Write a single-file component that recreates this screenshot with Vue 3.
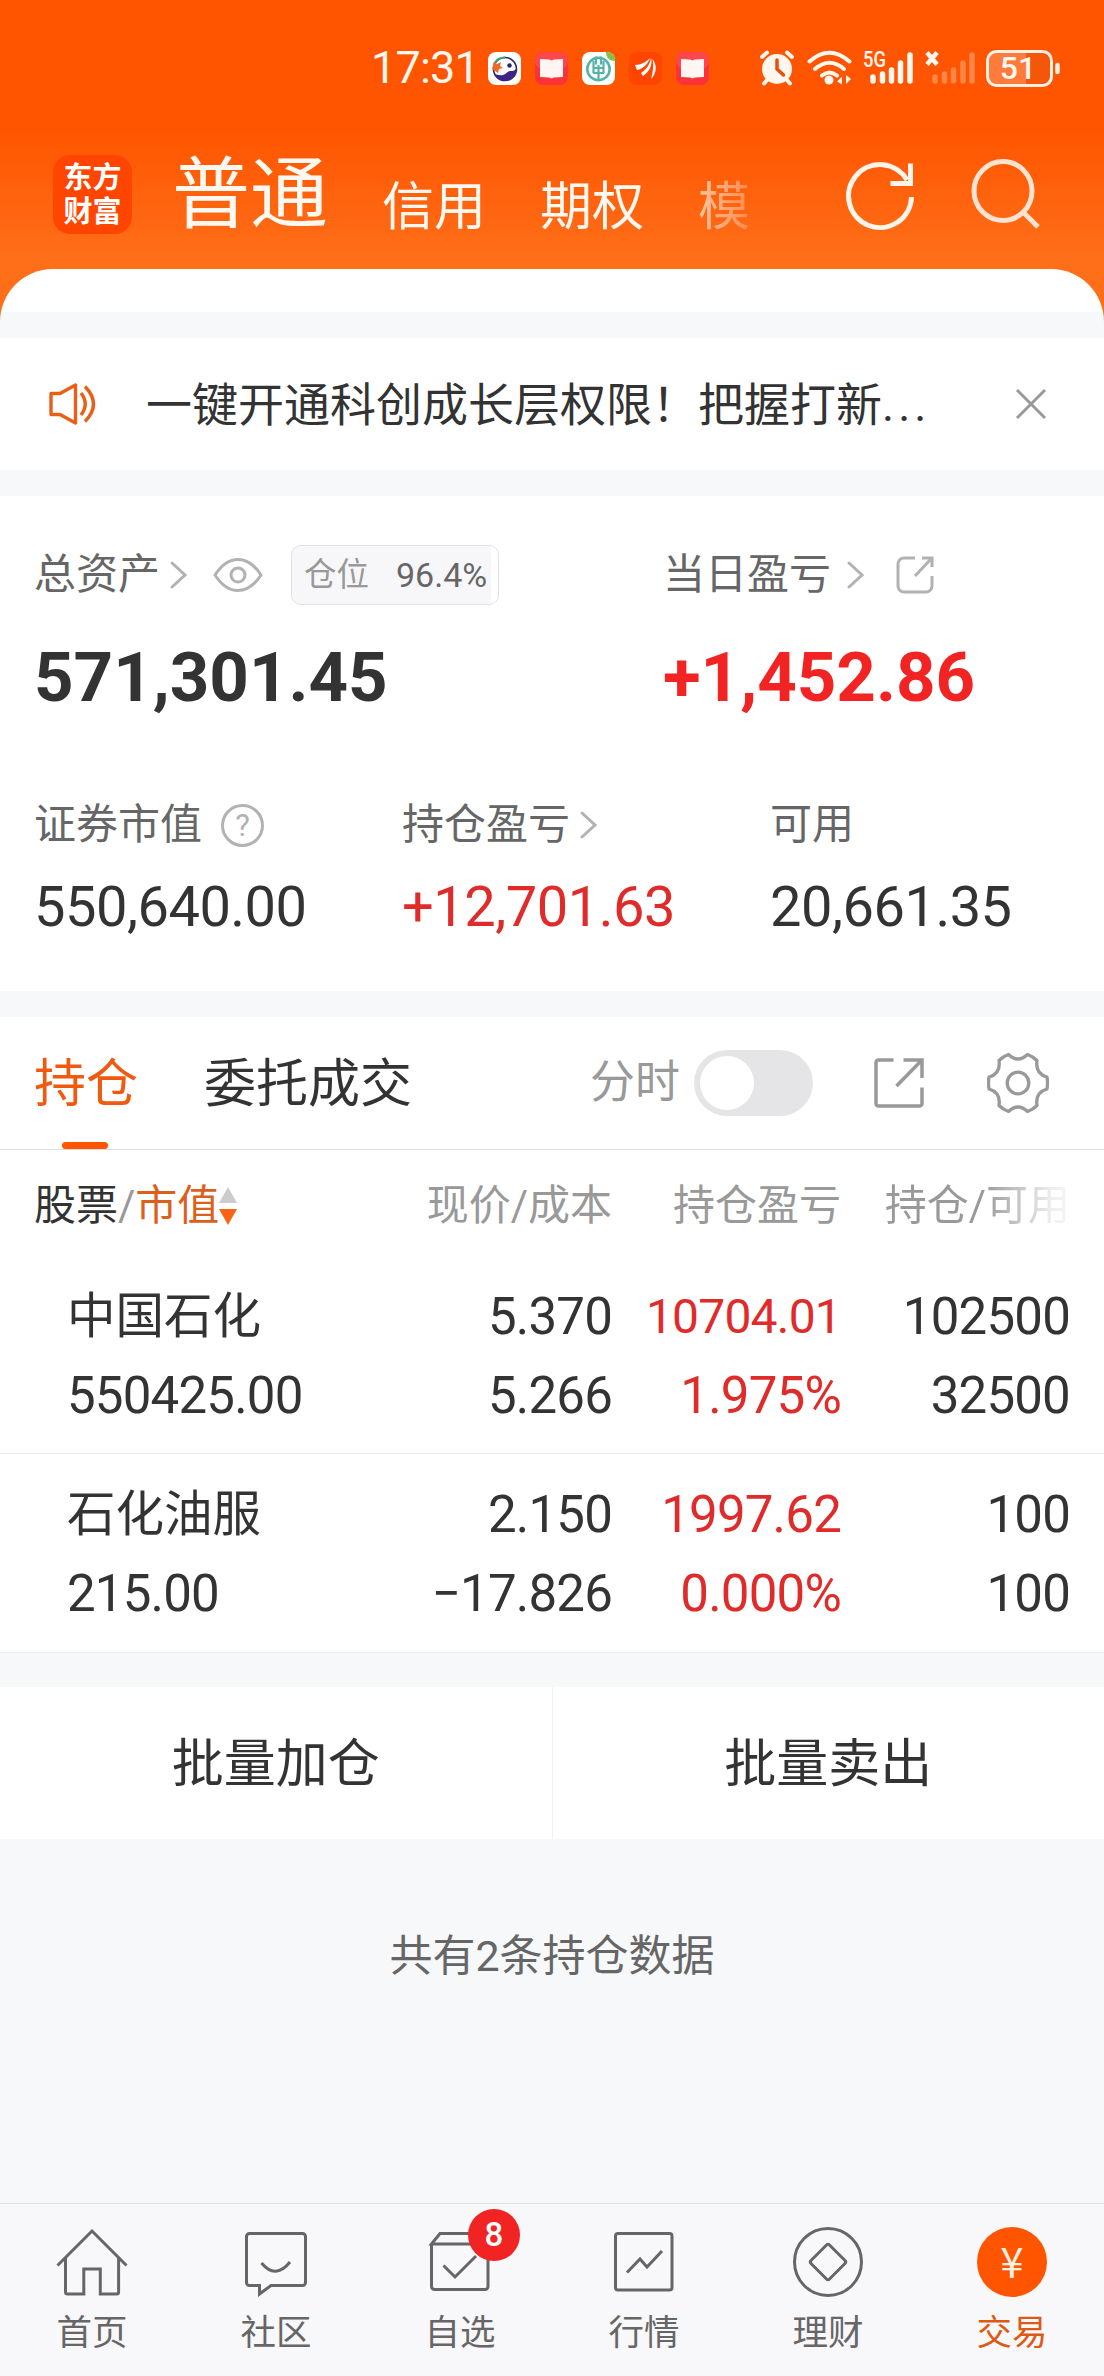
<template>
  <div class="page">
    <header class="top">
      <div class="statusbar">
        <span class="clock">17:31</span>
        <div class="notifs">
          <svg viewBox="0 0 33 33">
            <rect width="33" height="33" rx="8" fill="#fff" />
            <circle cx="17" cy="17" r="11.5" fill="#fff" stroke="#2c2a6e" stroke-width="1.6" />
            <path d="M6 12A12 12 0 0 1 17 5.500" fill="none" stroke="#39a86b" stroke-width="2" />
            <path d="M6 22c3 0 5 2 9 1s4-4 8-4 4-1 5.500-3C29 24 23 29 17 29S8 26 6 22z" fill="#3d2585" />
            <path d="M4 17l2-7 3 2 4-2-1 4 3 2-4 1-1 4-3-2z" fill="#ee6a2c" />
            <circle cx="21.500" cy="13.500" r="2.200" fill="#222a5c" />
          </svg>
          <svg viewBox="0 0 33 33">
            <rect width="33" height="33" rx="8" fill="#fb3338" />
            <rect width="33" height="17" rx="8" fill="#fd474b" />
            <path d="M5 7l9 .5 2.500 1 2.500-1 9-.5v18l-9 .5-2.500 1-2.500-1-9-.5z" fill="#fff6f4" />
          </svg>
          <svg viewBox="0 0 33 33">
            <rect width="33" height="33" rx="8" fill="#fff" />
            <path d="M24 0h1a8 8 0 0 1 8 8v1c-5 0-9-3-9-9z" fill="#7cc24c" />
            <circle cx="16.500" cy="17" r="11.200" fill="none" stroke="#55b3a8" stroke-width="2.600" />
            <path d="M14 4.500v8M19 4.500v8M11.500 9v12M21.500 9v12M16.500 13v15M11 16h11M11 21h11" fill="none" stroke="#55b3a8" stroke-width="2.200" />
          </svg>
          <svg viewBox="0 0 33 33">
            <rect width="33" height="33" rx="8" fill="#ff4500" />
            <path d="M6 13c6 0 11-3 15-7-2 6-7 11-13 12zM12 21c6-4 9-9 10-15 2 7-2 14-8 18zM22 27c2-7 3-14 1.500-20 5 6 4 15-1.500 20z" fill="#fff" />
          </svg>
          <svg viewBox="0 0 33 33">
            <rect width="33" height="33" rx="8" fill="#fb3338" />
            <rect width="33" height="17" rx="8" fill="#fd474b" />
            <path d="M5 7l9 .5 2.500 1 2.500-1 9-.5v18l-9 .5-2.500 1-2.500-1-9-.5z" fill="#fff6f4" />
          </svg>
        </div>
        <svg class="system" viewBox="0 0 304 40">
          <!-- alarm -->
          <g fill="none" stroke="#fff6ee" stroke-width="4" stroke-linecap="round">
            <circle cx="19" cy="21" r="15" fill="#fff6ee" stroke="none" />
            <path d="M4 9l5-4.500M34 9l-5-4.500M9 32l-3 3.500M29 32l3 3.500" />
            <path d="M19 12v9l6.500 6" stroke="#e8500a" stroke-width="3.500" />
          </g>
          <!-- wifi -->
          <g fill="none" stroke="#fff6ee" stroke-width="4" stroke-linecap="round">
            <path d="M51.500 13.500q20-17.500 40 0M57 21q14.500-12.500 29 0M64 27.500q7.500-6 15 0" />
            <circle cx="71" cy="32" r="4.500" fill="#fff6ee" stroke="none" />
            <path d="M79 33.500l5-5v8zM93 31l-5-4v9z" fill="#fff6ee" stroke="none" />
          </g>
          <text x="105" y="18.500" class="net" textLength="23" lengthAdjust="spacingAndGlyphs">5G</text>
          <g stroke="#fff6ee" stroke-width="5.500" stroke-linecap="round">
            <path d="M115 29v4M124.500 26v7M133.500 22v11M142.500 15v18M152 7v26" />
            <path d="M177 29v4M186.500 26v7M195.500 22v11M205 15v18M214 7v26" stroke="#ff8647" />
          </g>
          <path d="M169 4.500l10 12M179 4.500l-10 12" stroke="#fff6ee" stroke-width="4.500" />
          <rect x="229.500" y="3.500" width="64" height="34" rx="9" fill="#f4560a" />
          <path d="M238.500 3.500h29.500v34h-29.500a9 9 0 0 1-9-9v-16a9 9 0 0 1 9-9z" fill="#ff7b3b" />
          <rect x="229.500" y="3.500" width="64" height="34" rx="9" fill="none" stroke="#fff0e4" stroke-width="3" />
          <path d="M299.500 17v7" stroke="#fff0e4" stroke-width="4.500" stroke-linecap="round" />
          <text x="260" y="31" class="battery" text-anchor="middle">51</text>
        </svg>
      </div>
      <div class="navbar">
        <div class="logo"><span>东方</span><span>财富</span></div>
        <nav class="accounts">
          <span class="current">普通</span>
          <span>信用</span>
          <span>期权</span>
          <span class="fading">模</span>
        </nav>
        <svg class="refresh" viewBox="0 0 72 72">
          <path d="M63.100 20A31.500 31.500 0 1 0 67.500 37" />
          <path d="M66.500 3.500v20H46.500" />
        </svg>
        <svg class="search" viewBox="0 0 72 74">
          <ellipse cx="34" cy="32" rx="29" ry="29.500" />
          <path d="M55 54l14 14" />
        </svg>
      </div>
      <div class="sheet"></div>
    </header>

    <section class="notice">
      <svg class="speaker" viewBox="0 0 50 44">
        <path d="M3 11.500h9L27.500 3v38L12 32.500H3zM33 11q8.500 11 0 22M37 4.500q17 17.500 0 35" />
      </svg>
      <p>一键开通科创成长层权限！把握打新<i>...</i></p>
      <svg class="close" viewBox="0 0 32 32"><path d="M2 2l28 28M30 2L2 30" /></svg>
    </section>

    <section class="assets">
      <div class="totals">
        <div class="total">
          <div class="label">
            总资产
            <svg class="chevron" viewBox="0 0 20 30"><path d="M3 3l13 12L3 27" /></svg>
            <svg class="eye" viewBox="0 0 50 36">
              <path d="M2 18Q12 2.500 25 2.500T48 18Q38 33.500 25 33.500T2 18z" />
              <circle cx="25" cy="18" r="7" />
            </svg>
            <div class="ratio"><em>仓位</em><b>96.4%</b></div>
          </div>
          <div class="amount">571,301.45</div>
        </div>
        <div class="total">
          <div class="label">
            当日盈亏
            <svg class="chevron day" viewBox="0 0 20 30"><path d="M3 3l13 12L3 27" /></svg>
            <svg class="share-sm" viewBox="0 0 40 40">
              <path d="M20 3H9a6 6 0 0 0-6 6v22a6 6 0 0 0 6 6h22a6 6 0 0 0 6-6V21M27 3h10v9M36 4L20 21" />
            </svg>
          </div>
          <div class="amount up">+1,452.86</div>
        </div>
      </div>
      <div class="details">
        <div v-for="d in details" :key="d.label" class="detail">
          <div class="label">
            {{ d.label }}
            <span v-if="d.help" class="help">?</span>
            <svg v-if="d.link" class="chevron" viewBox="0 0 20 30"><path d="M3 3l13 12L3 27" /></svg>
          </div>
          <div class="value" :class="{ up: d.up }">{{ d.value }}</div>
        </div>
      </div>
    </section>

    <section class="positions">
      <div class="tabs">
        <span class="tab active">持仓</span>
        <span class="tab">委托成交</span>
        <span class="minute">分时</span>
        <span class="switch" :class="{ on: minuteOn }" @click="minuteOn = !minuteOn"></span>
        <svg class="share" viewBox="0 0 54 54">
          <path d="M21.500 4H6.500a2.500 2.500 0 0 0-2.500 2.500v41A2.500 2.500 0 0 0 6.500 50h41a2.500 2.500 0 0 0 2.500-2.500V31.500M31.500 4H50v18M49 5L24.500 30" />
        </svg>
        <svg class="gear" viewBox="0 0 62 62">
          <path d="M21.500 2.500Q31 11.500 40.500 2.500Q46 4.500 50 8.500Q48 21.500 60 25Q61 31 60 37Q48 40.500 50 53.500Q46 57.500 40.500 59.500Q31 50.500 21.500 59.500Q16 57.500 12 53.500Q14 40.500 2 37Q1 31 2 25Q14 21.500 12 8.500Q16 4.500 21.500 2.500Z" />
          <circle cx="31" cy="31" r="10.800" />
        </svg>
      </div>

      <div class="grid head">
        <div class="sorter">
          <span class="name">股票</span>/<span class="sorted">市值</span>
          <svg viewBox="0 0 18 38"><path d="M9 0l9 16H0z" fill="#ccc" /><path d="M9 38l9-16H0z" fill="#fa6414" /></svg>
        </div>
        <div>现价/成本</div>
        <div>持仓盈亏</div>
        <div class="last">持仓/可用</div>
      </div>
      <div v-for="s in stocks" :key="s.name" class="grid row">
        <div class="stock">{{ s.name }}</div>
        <div>{{ s.price }}</div>
        <div class="up" :class="{ small: s.profit.length > 7 }">{{ s.profit }}</div>
        <div>{{ s.held }}</div>
        <div class="stock">{{ s.market }}</div>
        <div>{{ s.cost }}</div>
        <div class="up">{{ s.percent }}</div>
        <div>{{ s.usable }}</div>
      </div>
    </section>

    <section class="batch">
      <button>批量加仓</button>
      <button>批量卖出</button>
    </section>
    <p class="count">共有{{ stocks.length }}条持仓数据</p>

    <footer class="tabbar">
      <div class="item">
        <svg viewBox="0 0 72 72"><path d="M1.500 39.500L36 5l34.500 34.500M9.500 32v34a2 2 0 0 0 2 2h16.300V43h16.500v25h16.300a2 2 0 0 0 2-2V32" /></svg>
        <span>首页</span>
      </div>
      <div class="item">
        <svg viewBox="0 0 72 72"><path d="M9.500 7.500h53a3 3 0 0 1 3 3v46a3 3 0 0 1-3 3H31L19.500 68v-8.500h-10a3 3 0 0 1-3-3v-46a3 3 0 0 1 3-3zM21.500 37q14 17 28.500-1" /></svg>
        <span>社区</span>
      </div>
      <div class="item">
        <svg viewBox="0 0 72 72"><path d="M7.500 18L16 7.500h40L64.500 18zM7.500 18v42.500a3 3 0 0 0 3 3h50.500a3 3 0 0 0 3-3V18M19.500 39.500L31 51l21-21" /></svg>
        <i class="badge">8</i>
        <span>自选</span>
      </div>
      <div class="item">
        <svg viewBox="0 0 72 72"><rect x="7.500" y="7.500" width="56.500" height="56.500" rx="2.500" /><path d="M19 46.500L32 33l7 8 15-16" /></svg>
        <span>行情</span>
      </div>
      <div class="item">
        <svg viewBox="0 0 72 72"><circle cx="36" cy="36" r="33.500" /><path d="M34.500 19q1.500-1.500 3 0l15.500 15.500q1.500 1.500 0 3L37.500 53q-1.500 1.500-3 0L19 37.500q-1.500-1.500 0-3z" /></svg>
        <span>理财</span>
      </div>
      <div class="item active">
        <div class="yuan">¥</div>
        <span>交易</span>
      </div>
    </footer>
  </div>
</template>

<script setup>
import { ref } from "vue";

const minuteOn = ref(false)

const details = [
  { label: "证券市值", value: "550,640.00", help: true },
  { label: "持仓盈亏", value: "+12,701.63", link: true, up: true },
  { label: "可用", value: "20,661.35" },
]

const stocks = [
  {
    name: "中国石化", market: "550425.00",
    price: "5.370", cost: "5.266",
    profit: "10704.01", percent: "1.975%",
    held: "102500", usable: "32500",
  },
  {
    name: "石化油服", market: "215.00",
    price: "2.150", cost: "−17.826",
    profit: "1997.62", percent: "0.000%",
    held: "100", usable: "100",
  },
]
</script>

<style>
body {
  margin: 0;
  background: #f6f7f9;
}
</style>

<style scoped>
.page {
  width: 1104px;
  height: 2376px;
  display: flex;
  flex-direction: column;
  overflow: hidden;
  background: #f7f8fa;
  color: #333;
  font-family: Roboto, "Noto Sans CJK SC", sans-serif;
}

svg {
  flex: none;
  display: block;
  fill: none;
}

p {
  margin: 0;
}

i, em {
  font-style: normal;
}

.up {
  color: #e02b2b;
}

/* header */
.top {
  height: 338px;
  background: linear-gradient(#ff5500 130px, #ff6f1a 262px);
}

.statusbar {
  height: 136px;
  display: flex;
  align-items: center;
  padding-left: 371px;
}

.clock {
  width: 117px;
  font-size: 45px;
  letter-spacing: -0.8px;
  line-height: 136px;
  color: #fff6ee;
}

.notifs {
  display: flex;
  gap: 14px;
}

.notifs svg {
  width: 33px;
  height: 33px;
}

.system {
  width: 304px;
  height: 40px;
  margin-left: 49px;
}

.net {
  fill: #fff6ee;
  font-size: 22px;
  font-weight: 500;
}

.battery {
  fill: #fff6ee;
  font-size: 32px;
  font-weight: 500;
}

.navbar {
  height: 133px;
  display: flex;
  align-items: flex-start;
  padding-left: 53px;
}

.logo {
  width: 79px;
  height: 79px;
  box-sizing: border-box;
  margin-top: 19px;
  padding-top: 6px;
  border-radius: 17px;
  background: #ff4500;
  color: #fff;
  font-size: 29px;
  font-weight: 700;
  line-height: 34px;
  text-align: center;
  display: flex;
  flex-direction: column;
}

.accounts {
  width: 670px;
  margin-left: 40px;
  display: flex;
  align-items: flex-start;
  gap: 54px;
  color: #fff8f0;
  font-size: 52px;
  line-height: 143px;
  white-space: nowrap;
}

.accounts .current {
  font-size: 78px;
  line-height: 120px;
}

.accounts .fading {
  background: linear-gradient(90deg, #ffc5a0, #ff8a4c);
  background-clip: text;
  color: transparent;
}

.refresh {
  width: 72px;
  height: 72px;
  margin-top: 24px;
  margin-left: 2px;
  stroke: #fff4ea;
  stroke-width: 5;
}

.search {
  width: 72px;
  height: 74px;
  margin-top: 23px;
  margin-left: 53px;
  stroke: #ffe3d0;
  stroke-width: 5;
}

.sheet {
  height: 69px;
  border-radius: 53px 53px 0 0;
  background: linear-gradient(#fff 43px, #f7f8fa 43px);
}

/* notice */
.notice {
  height: 132px;
  box-sizing: border-box;
  padding-left: 48px;
  display: flex;
  align-items: center;
  background: #fff;
}

.speaker {
  width: 50px;
  height: 44px;
  stroke: #ea5f17;
  stroke-width: 3.4;
  stroke-linejoin: round;
}

.notice p {
  width: 869px;
  margin-left: 48px;
  padding-top: 2px;
  font-size: 46px;
  line-height: 130px;
  white-space: nowrap;
}

.notice i {
  letter-spacing: 4px;
}

.close {
  width: 32px;
  height: 32px;
  stroke: #999;
  stroke-width: 3;
}

/* assets */
.assets {
  height: 495px;
  box-sizing: border-box;
  margin-top: 26px;
  padding: 43px 0 0 34px;
  background: #fff;
}

.totals {
  display: grid;
  grid-template-columns: 629px 1fr;
}

.label {
  display: flex;
  align-items: center;
  height: 72px;
  font-size: 42px;
  line-height: 72px;
  color: #666;
  white-space: nowrap;
}

.chevron {
  width: 20px;
  height: 30px;
  margin-left: 9px;
  stroke: #b2b2b2;
  stroke-width: 3;
  stroke-linecap: round;
}

.chevron.day {
  margin-left: 15px;
}

.eye {
  width: 50px;
  height: 36px;
  margin-left: 24px;
  stroke: #b2b2b2;
  stroke-width: 3;
}

.ratio {
  width: 208px;
  height: 60px;
  box-sizing: border-box;
  margin-left: 28px;
  padding-left: 12px;
  display: flex;
  align-items: center;
  border: 1px solid #e2e2e4;
  border-radius: 10px;
  background: linear-gradient(90deg, #f7f7fa 199px, #fff 199px);
}

.ratio em {
  width: 92px;
  font-size: 32.5px;
  color: #999;
}

.ratio b {
  font-size: 34px;
  font-weight: 400;
}

.share-sm {
  width: 40px;
  height: 40px;
  margin-left: 29px;
  stroke: #b2b2b2;
  stroke-width: 3;
}

.amount {
  margin-top: 21px;
  height: 92px;
  font-size: 69px;
  font-weight: 700;
  line-height: 92px;
}

.amount.up {
  color: #f22323;
}

.details {
  margin-top: 65px;
  display: grid;
  grid-template-columns: 368px 368px 1fr;
}

.help {
  width: 43px;
  height: 43px;
  box-sizing: border-box;
  margin-left: 19px;
  border: 3px solid #b2b2b2;
  border-radius: 50%;
  color: #b2b2b2;
  font-size: 31px;
  line-height: 38px;
  text-align: center;
}

.value {
  margin-top: 6px;
  font-size: 56px;
  letter-spacing: -0.5px;
  line-height: 80px;
}

/* positions */
.positions {
  margin-top: 26px;
  background: #fff;
}

.tabs {
  height: 133px;
  box-sizing: border-box;
  padding-left: 34px;
  border-bottom: 1px solid #ddd;
  display: flex;
  align-items: center;
}

.tab {
  position: relative;
  margin-right: 66px;
  padding-top: 4px;
  font-size: 52px;
  line-height: 128px;
}

.tab.active {
  color: #f05a10;
}

.tab.active::after {
  content: "";
  position: absolute;
  left: 28px;
  bottom: 0;
  width: 46px;
  height: 7px;
  border-radius: 4px;
  background: #ff5500;
}

.minute {
  margin-left: 112px;
  font-size: 45px;
  line-height: 132px;
  color: #999;
}

.switch {
  width: 119px;
  height: 66px;
  box-sizing: border-box;
  margin-left: 14px;
  padding: 6px;
  border-radius: 33px;
  background: #e5e5e7;
}

.switch::before {
  content: "";
  display: block;
  width: 54px;
  height: 54px;
  border-radius: 50%;
  background: #fff;
}

.switch.on {
  background: #ff5500;
}

.switch.on::before {
  margin-left: auto;
}

.share {
  width: 54px;
  height: 54px;
  margin-left: 59px;
  stroke: #999;
  stroke-width: 3.5;
}

.gear {
  width: 62px;
  height: 62px;
  margin-left: 61px;
  stroke: #999;
  stroke-width: 3.3;
  stroke-linejoin: round;
}

.grid {
  display: grid;
  grid-template-columns: 300px 278px 229px 229px;
  padding: 0 34px;
  text-align: right;
  white-space: nowrap;
}

.head {
  height: 106px;
  font-size: 42px;
  line-height: 111px;
  color: #999;
}

.sorter {
  display: flex;
  align-items: center;
}

.sorter .name {
  color: #333;
}

.sorter .sorted {
  color: #dd5f1c;
}

.sorter svg {
  width: 18px;
  height: 38px;
}

.head .last {
  background: linear-gradient(90deg, #999 62%, #eee 92%, #f6f6f6);
  background-clip: text;
  color: transparent;
}

.row {
  height: 198px;
  box-sizing: border-box;
  padding-top: 21px;
  border-bottom: 1px solid #ebebeb;
  font-size: 51px;
  line-height: 79px;
  grid-auto-rows: 79px;
  letter-spacing: -0.8px;
}

.row + .row {
  height: 199px;
}

.row .stock {
  padding-left: 33px;
  text-align: left;
}

.row .stock:first-child {
  font-size: 48.5px;
  letter-spacing: 0;
}

.row .small {
  font-size: 48px;
}

/* batch actions */
.batch {
  height: 152px;
  margin-top: 34px;
  display: flex;
  background: #fff;
}

.batch button {
  flex: 1;
  padding: 4px 0 0;
  border: none;
  background: none;
  color: #333;
  font-family: inherit;
  font-size: 52px;
  line-height: 148px;
}

.batch button + button {
  border-left: 1px solid #f2f2f4;
}

.count {
  margin-top: 77px;
  font-size: 43px;
  line-height: 80px;
  text-align: center;
  color: #666;
}

/* bottom bar */
.tabbar {
  height: 173px;
  box-sizing: border-box;
  margin-top: auto;
  padding-top: 22px;
  border-top: 1px solid #e0e0e2;
  background: #f8f8fa;
  display: flex;
}

.item {
  position: relative;
  flex: 1;
  display: flex;
  flex-direction: column;
  align-items: center;
  color: #666;
  font-size: 35.5px;
  line-height: 70px;
}

.item svg {
  width: 72px;
  height: 72px;
  stroke: #666;
  stroke-width: 3;
}

.item.active {
  color: #dd5a14;
}

.yuan {
  width: 70px;
  height: 70px;
  margin: 1px;
  border-radius: 50%;
  background: #ff5500;
  color: #fff0e0;
  font-family: "Noto Sans CJK SC", sans-serif;
  font-size: 42px;
  line-height: 66px;
  text-align: center;
}

.badge {
  position: absolute;
  left: 100px;
  top: -17px;
  width: 52px;
  height: 52px;
  border-radius: 50%;
  background: #f22323;
  color: #fff;
  font-size: 33px;
  font-weight: 500;
  line-height: 52px;
  text-align: center;
}
</style>
